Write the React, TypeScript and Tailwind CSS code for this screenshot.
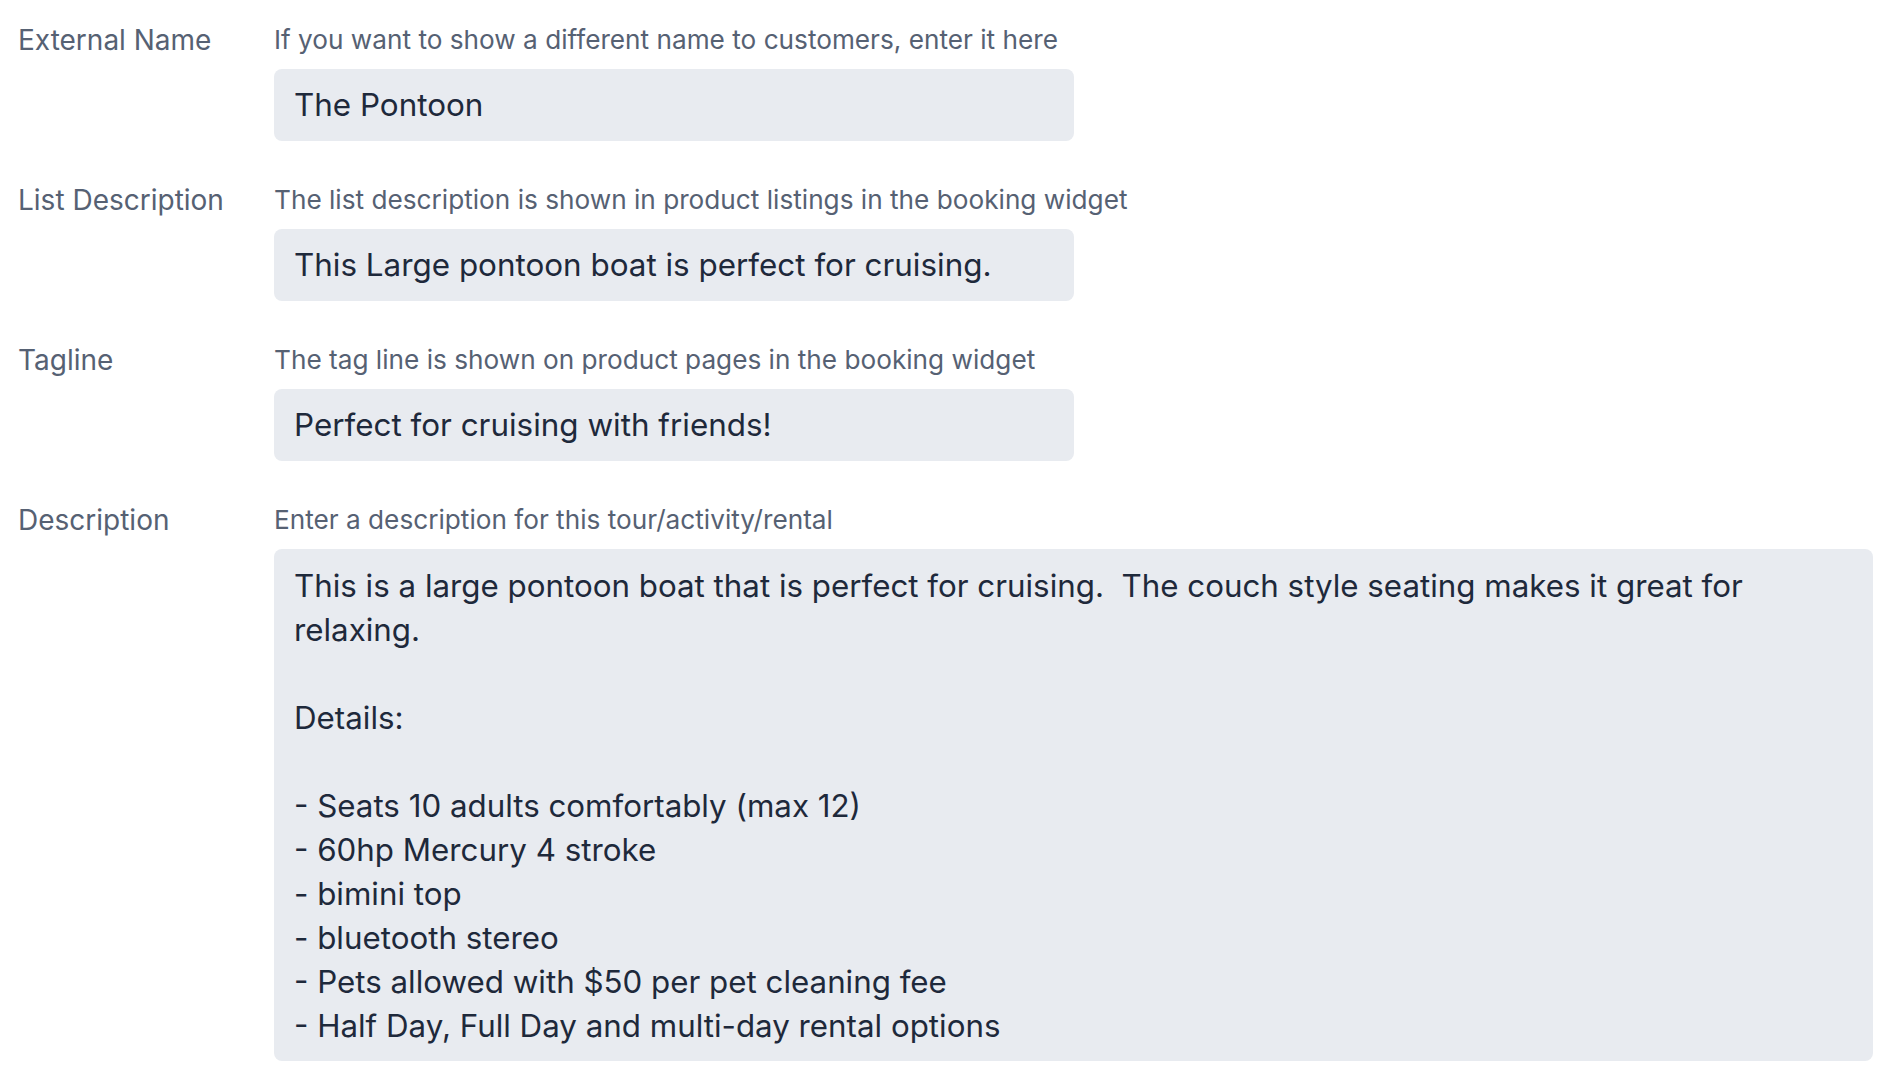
import { useState } from 'react';

interface Field {
  label: string;
  hint: string;
  value: string;
  multiline?: boolean;
}

const initialFields: Field[] = [
  {
    label: 'External Name',
    hint: 'If you want to show a different name to customers, enter it here',
    value: 'The Pontoon',
  },
  {
    label: 'List Description',
    hint: 'The list description is shown in product listings in the booking widget',
    value: 'This Large pontoon boat is perfect for cruising.',
  },
  {
    label: 'Tagline',
    hint: 'The tag line is shown on product pages in the booking widget',
    value: 'Perfect for cruising with friends!',
  },
  {
    label: 'Description',
    hint: 'Enter a description for this tour/activity/rental',
    value:
      'This is a large pontoon boat that is perfect for cruising.  The couch style seating makes it great for relaxing.\n\nDetails:\n\n- Seats 10 adults comfortably (max 12)\n- 60hp Mercury 4 stroke\n- bimini top\n- bluetooth stereo\n- Pets allowed with $50 per pet cleaning fee\n- Half Day, Full Day and multi-day rental options',
    multiline: true,
  },
];

export default function App() {
  const [fields, setFields] = useState(initialFields);

  const update = (i: number, value: string) => {
    setFields((prev) => prev.map((f, idx) => (idx === i ? { ...f, value } : f)));
  };

  return (
    <div className="min-h-screen bg-white pl-[18px] pr-[27px] pt-6 font-['Inter','Noto_Sans',sans-serif]">
      <div className="flex flex-col gap-[43px]">
        {fields.map((f, i) => (
          <div key={f.label} className="flex">
            <label className="w-[256px] shrink-0 text-[28px] leading-8 text-[#566173]">{f.label}</label>
            <div className="flex-1">
              <p className="mb-[13px] text-[26.2px] leading-8 text-[#566173]">{f.hint}</p>
              {f.multiline ? (
                <textarea
                  value={f.value}
                  onChange={(e) => update(i, e.target.value)}
                  className="block h-[512px] w-full resize-none rounded-lg bg-[#e8ebf0] px-5 pt-[15px] text-[31.3px] leading-[44px] text-[#1e293b] outline-none"
                />
              ) : (
                <input
                  value={f.value}
                  onChange={(e) => update(i, e.target.value)}
                  className="block h-[72px] w-[800px] rounded-lg bg-[#e8ebf0] px-5 text-[31.4px] text-[#1e293b] outline-none"
                />
              )}
            </div>
          </div>
        ))}
      </div>
    </div>
  );
}
